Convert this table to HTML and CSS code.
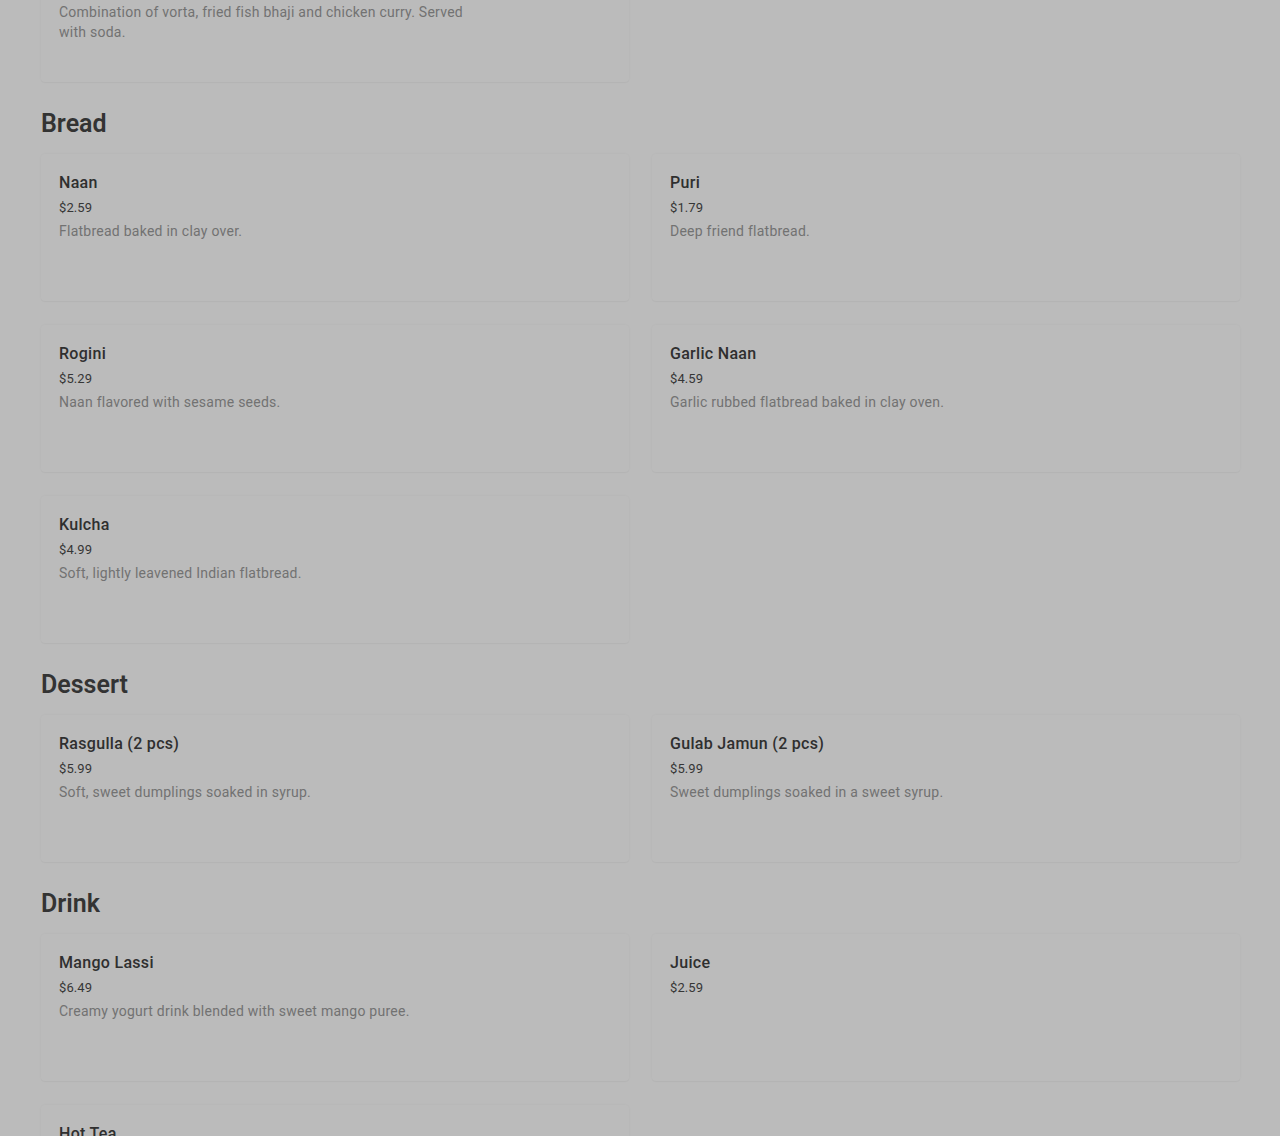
FILE: index.html
```html
<!DOCTYPE html>
<html lang="en">
<head>
<meta charset="utf-8">
<title>Menu</title>
<link rel="stylesheet" href="styles.css">
</head>
<body>
<main class="menu">
  <section class="section section-first">
    <div class="grid">
      <article class="card">
        <h3 class="item-name">Shutki Platter</h3>
        <div class="item-price">$12.99</div>
        <p class="item-desc">Combination of vorta, fried fish bhaji and chicken curry. Served with soda.</p>
      </article>
    </div>
  </section>

  <section class="section">
    <h2 class="section-title">Bread</h2>
    <div class="grid">
      <article class="card">
        <h3 class="item-name">Naan</h3>
        <div class="item-price">$2.59</div>
        <p class="item-desc">Flatbread baked in clay over.</p>
      </article>
      <article class="card">
        <h3 class="item-name">Puri</h3>
        <div class="item-price">$1.79</div>
        <p class="item-desc">Deep friend flatbread.</p>
      </article>
      <article class="card">
        <h3 class="item-name">Rogini</h3>
        <div class="item-price">$5.29</div>
        <p class="item-desc">Naan flavored with sesame seeds.</p>
      </article>
      <article class="card">
        <h3 class="item-name">Garlic Naan</h3>
        <div class="item-price">$4.59</div>
        <p class="item-desc">Garlic rubbed flatbread baked in clay oven.</p>
      </article>
      <article class="card">
        <h3 class="item-name">Kulcha</h3>
        <div class="item-price">$4.99</div>
        <p class="item-desc">Soft, lightly leavened Indian flatbread.</p>
      </article>
    </div>
  </section>

  <section class="section">
    <h2 class="section-title">Dessert</h2>
    <div class="grid">
      <article class="card">
        <h3 class="item-name">Rasgulla (2 pcs)</h3>
        <div class="item-price">$5.99</div>
        <p class="item-desc">Soft, sweet dumplings soaked in syrup.</p>
      </article>
      <article class="card">
        <h3 class="item-name">Gulab Jamun (2 pcs)</h3>
        <div class="item-price">$5.99</div>
        <p class="item-desc">Sweet dumplings soaked in a sweet syrup.</p>
      </article>
    </div>
  </section>

  <section class="section">
    <h2 class="section-title">Drink</h2>
    <div class="grid">
      <article class="card">
        <h3 class="item-name">Mango Lassi</h3>
        <div class="item-price">$6.49</div>
        <p class="item-desc">Creamy yogurt drink blended with sweet mango puree.</p>
      </article>
      <article class="card">
        <h3 class="item-name">Juice</h3>
        <div class="item-price">$2.59</div>
      </article>
      <article class="card">
        <h3 class="item-name">Hot Tea</h3>
        <div class="item-price">$1.99</div>
        <p class="item-desc">Freshly brewed tea.</p>
      </article>
    </div>
  </section>
</main>
</body>
</html>
```

FILE: styles.css
```css
html, body {
  margin: 0;
  padding: 0;
  background: #bbbbbb;
  overflow: hidden;
}

body {
  font-family: Roboto, "Liberation Sans", Arial, sans-serif;
  color: #2b2b2b;
}

.menu {
  max-width: 1199px;
  margin: 0 auto;
  padding: 0 40px 40px 41px;
}

.section-first {
  margin-top: -65px;
}

.section {
  margin-bottom: 24px;
}

.section-title {
  margin: 0 0 14px;
  padding-top: 2px;
  font-size: 25px;
  line-height: 32px;
  font-weight: 600;
  color: #333333;
}

.grid {
  display: grid;
  grid-template-columns: 1fr 1fr;
  gap: 23px;
  row-gap: 24px;
}

.card {
  min-height: 147px;
  box-sizing: border-box;
  padding: 17px 18px 16px;
  background: #bbbbbb;
  border-radius: 4px;
  box-shadow: 0 0 3px rgba(0, 0, 0, 0.035), 0 1px 1px rgba(0, 0, 0, 0.025);
}

.item-name {
  margin: 0;
  font-size: 16px;
  line-height: 24px;
  font-weight: 500;
  letter-spacing: 0.3px;
  color: #2f2f2f;
}

.item-price {
  margin-top: 3px;
  font-size: 13px;
  line-height: 20px;
  letter-spacing: 0.1px;
  color: #363636;
}

.item-desc {
  margin: 3px 0 0;
  max-width: 420px;
  font-size: 14px;
  line-height: 20px;
  letter-spacing: 0.25px;
  color: #727272;
}
```
